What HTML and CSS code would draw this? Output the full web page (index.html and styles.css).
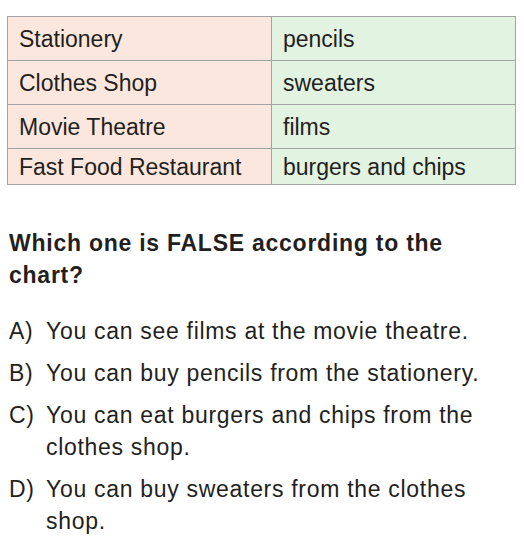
FILE: index.html
```html
<!DOCTYPE html>
<html>
<head>
<meta charset="utf-8">
<link rel="stylesheet" href="styles.css">
</head>
<body>
<table class="chart">
  <tr><td class="place">Stationery</td><td class="item">pencils</td></tr>
  <tr><td class="place">Clothes Shop</td><td class="item">sweaters</td></tr>
  <tr><td class="place">Movie Theatre</td><td class="item">films</td></tr>
  <tr class="last"><td class="place">Fast Food Restaurant</td><td class="item">burgers and chips</td></tr>
</table>
<p class="question">Which one is FALSE according to the chart?</p>
<ol class="options">
  <li class="option"><span class="label">A)</span><span class="text">You can see films at the movie theatre.</span></li>
  <li class="option"><span class="label">B)</span><span class="text">You can buy pencils from the stationery.</span></li>
  <li class="option"><span class="label">C)</span><span class="text">You can eat burgers and chips from the clothes shop.</span></li>
  <li class="option"><span class="label">D)</span><span class="text">You can buy sweaters from the clothes shop.</span></li>
</ol>
</body>
</html>
```
FILE: styles.css
```css
html, body {
  margin: 0;
  padding: 0;
  background: #ffffff;
}
body {
  font-family: "Liberation Sans", Arial, sans-serif;
  color: #231f20;
  width: 524px;
}
.chart {
  border-collapse: collapse;
  margin: 16px 0 0 7px;
  width: 509px;
  font-size: 23px;
}
.chart td {
  border: 1px solid #a3a3a3;
  height: 43px;
  padding: 1px 0 0 11px;
  line-height: 42px;
  box-sizing: border-box;
  white-space: nowrap;
}
.chart .last td {
  height: 35px;
  line-height: 34px;
  padding-top: 1px;
}
.chart .place {
  background: #fbe7dd;
  width: 264px;
}
.chart .item {
  background: #e3f3e1;
}
.question {
  margin: 42px 40px 0 9px;
  font-size: 23px;
  font-weight: bold;
  letter-spacing: 0.75px;
  line-height: 32px;
}
.options {
  list-style: none;
  margin: 24px 0 0 9px;
  padding: 0;
  font-size: 23px;
  letter-spacing: 0.7px;
  line-height: 32px;
  width: 507px;
}
.option {
  display: flex;
  margin-bottom: 10px;
}
.label {
  flex: 0 0 37px;
}
.text {
  flex: 1;
}
```
